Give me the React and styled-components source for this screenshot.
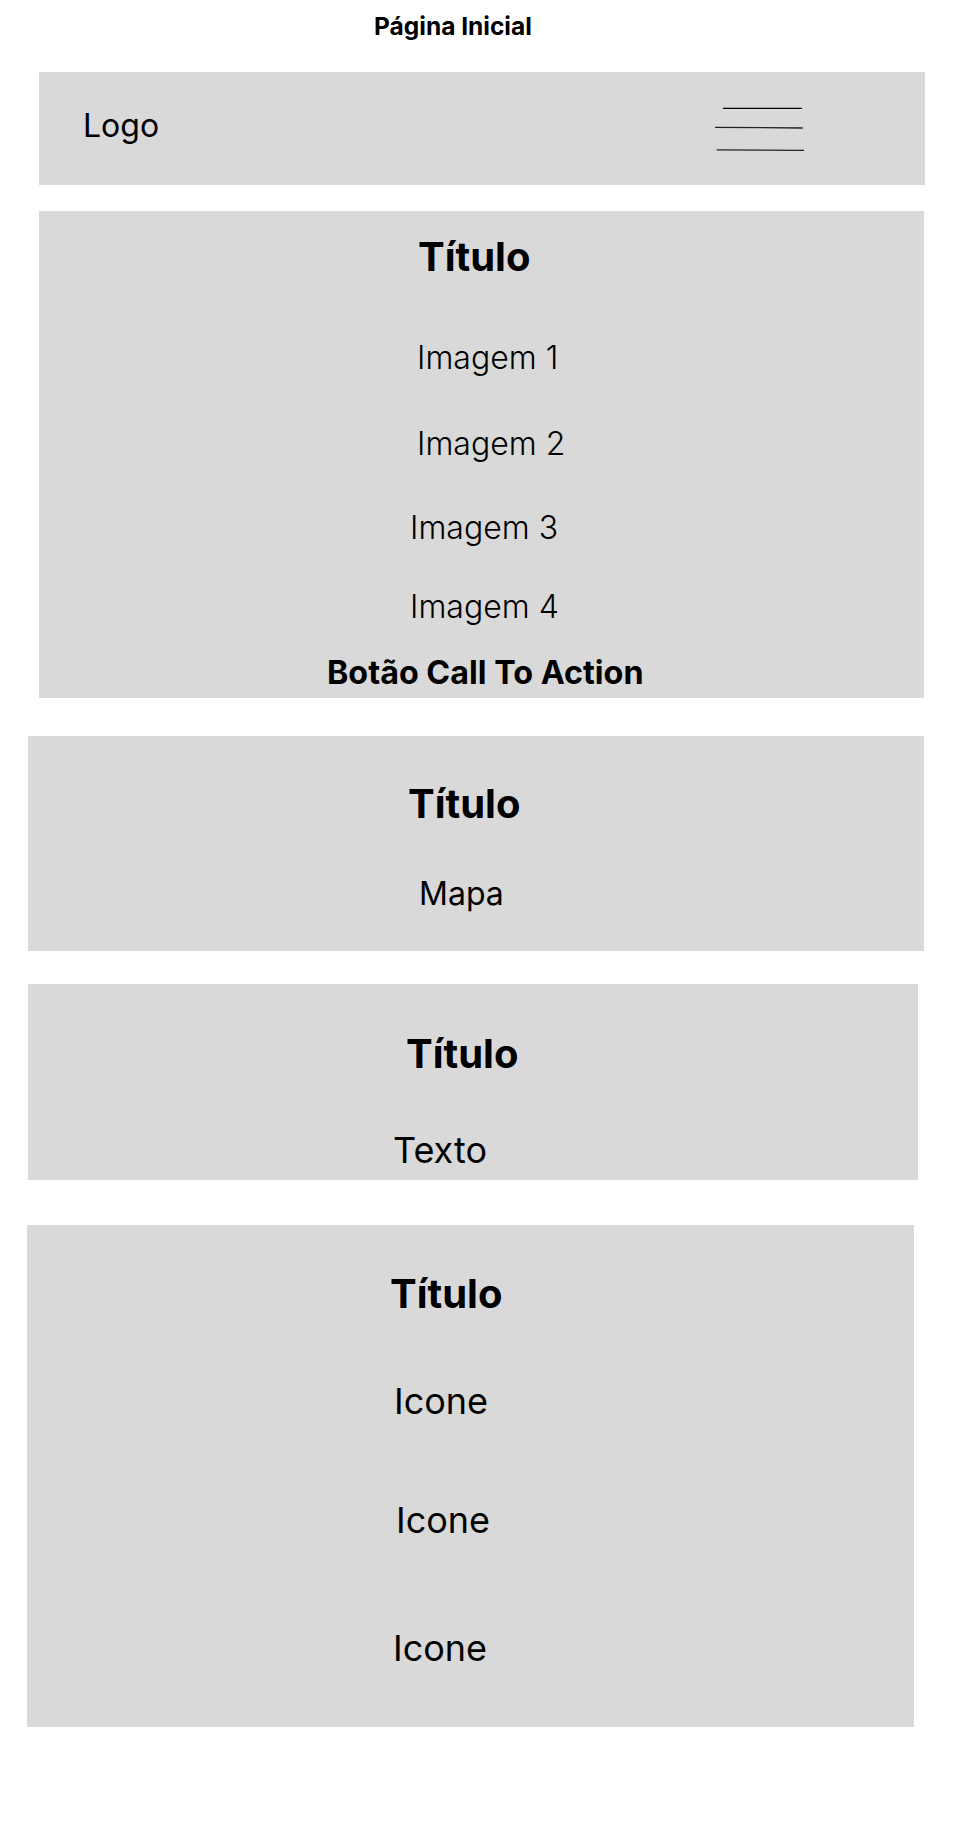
import styled, { createGlobalStyle } from "styled-components"

const GlobalStyle = createGlobalStyle`
    html, body {
        margin: 0;
        padding: 0;
        background: #ffffff;
    }
    body {
        font-family: Inter, "Noto Sans", "Liberation Sans", sans-serif;
        color: #000000;
    }
`

const Page = styled.div`
    display: flex;
    flex-direction: column;
    align-items: flex-start;
    width: 971px;
    min-height: 1829px;
    padding-top: 12px;
    box-sizing: border-box;
`

const PageTitle = styled.h1`
    margin: 0 0 0 374px;
    font-size: 24.5px;
    line-height: 1.2;
    font-weight: 700;
`

const Block = styled.section`
    display: flex;
    flex-direction: column;
    align-items: flex-start;
    box-sizing: border-box;
    background: #d9d9d9;
    margin-left: ${p => p.$left}px;
    margin-top: ${p => p.$top}px;
    width: ${p => p.$width}px;
    height: ${p => p.$height}px;
    padding-top: ${p => p.$pad}px;
`

const Header = styled.header`
    display: flex;
    justify-content: space-between;
    align-items: flex-start;
    box-sizing: border-box;
    background: #d9d9d9;
    margin: 31px 0 0 39px;
    width: 886px;
    height: 113px;
    padding: 35px 120px 0 44px;
`

const Logo = styled.span`
    font-size: 32px;
    line-height: 1.2;
    font-weight: 400;
`

const Burger = styled.svg`
    display: block;
    width: 92px;
    height: 46px;
    margin-top: -1px;
`

const Title = styled.h2`
    margin: ${p => p.$gap || 0}px 0 0 ${p => p.$x}px;
    font-size: 40px;
    line-height: 1.2;
    font-weight: 700;
`

const Item = styled.p`
    margin: ${p => p.$gap}px 0 0 ${p => p.$x}px;
    font-size: ${p => p.$size}px;
    line-height: 1.2;
    font-weight: ${p => p.$weight || 400};
`

const Action = styled.button`
    margin: ${p => p.$gap}px 0 0 ${p => p.$x}px;
    padding: 0;
    border: none;
    background: none;
    font-family: inherit;
    font-size: 32.3px;
    line-height: 1.2;
    font-weight: 700;
    color: #000;
`

const MenuIcon = () => (
    <Burger viewBox="0 0 92 46">
        <line x1="10" y1="2.3" x2="89" y2="2.3" stroke="#000" strokeWidth="1.2" />
        <line x1="2" y1="21.3" x2="89.7" y2="22" stroke="#222" strokeWidth="1.3" />
        <line x1="3.7" y1="43.8" x2="91" y2="44.3" stroke="#222" strokeWidth="1.3" />
    </Burger>
)

const images = [
    { label: "Imagem 1", x: 378, gap: 58 },
    { label: "Imagem 2", x: 378, gap: 47 },
    { label: "Imagem 3", x: 371, gap: 46 },
    { label: "Imagem 4", x: 371, gap: 40 },
]

const icons = [
    { x: 367, gap: 62 },
    { x: 369, gap: 75 },
    { x: 366, gap: 85 },
]

export default function App() {
    return (
        <>
            <GlobalStyle />
            <Page>
                <PageTitle>Página Inicial</PageTitle>

                <Header>
                    <Logo>Logo</Logo>
                    <MenuIcon />
                </Header>

                <Block $left={39} $top={26} $width={885} $height={487} $pad={22}>
                    <Title $x={379}>Título</Title>
                    {images.map(img => (
                        <Item key={img.label} $x={img.x} $gap={img.gap} $size={32} $weight={300}>
                            {img.label}
                        </Item>
                    ))}
                    <Action $x={288} $gap={28}>Botão Call To Action</Action>
                </Block>

                <Block $left={28} $top={38} $width={896} $height={215} $pad={44}>
                    <Title $x={380}>Título</Title>
                    <Item $x={391} $gap={47} $size={32}>Mapa</Item>
                </Block>

                <Block $left={28} $top={33} $width={890} $height={196} $pad={46}>
                    <Title $x={378}>Título</Title>
                    <Item $x={365} $gap={51} $size={36}>Texto</Item>
                </Block>

                <Block $left={27} $top={45} $width={887} $height={502} $pad={45}>
                    <Title $x={363}>Título</Title>
                    {icons.map((icon, i) => (
                        <Item key={i} $x={icon.x} $gap={icon.gap} $size={36}>Icone</Item>
                    ))}
                </Block>
            </Page>
        </>
    )
}
